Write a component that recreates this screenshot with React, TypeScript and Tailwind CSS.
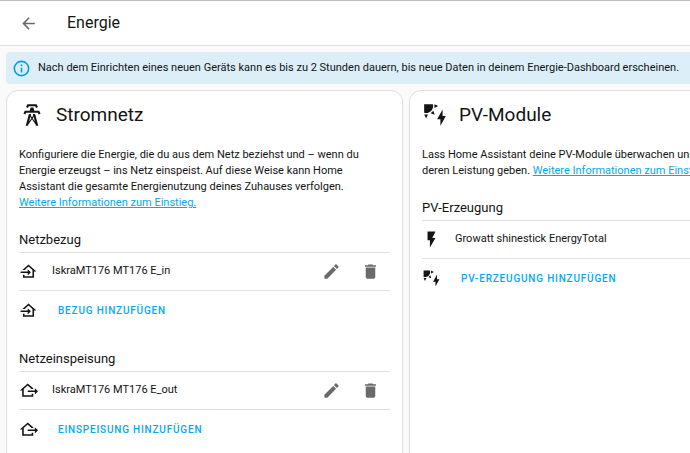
import React from 'react';

// Icon outlines on a 24x24 grid
const icons = {
  arrowLeft: 'M20,11V13H8L13.5,18.5L12.08,19.92L4.16,12L12.08,4.08L13.5,5.5L8,11H20Z',
  info: 'M11,9H13V7H11M12,20C7.59,20 4,16.41 4,12C4,7.59 7.59,4 12,4C16.41,4 20,7.59 20,12C20,16.41 16.41,20 12,20M12,2A10,10 0 0,0 2,12A10,10 0 0,0 12,22A10,10 0 0,0 22,12A10,10 0 0,0 12,2M11,17H13V11H11V17Z',
  tower: 'M8.28,5.45L6.5,4.55L7.76,2H16.23L17.5,4.55L15.72,5.44L15,4H9L8.28,5.45M18.62,8H14.09L13.3,5H10.7L9.91,8H5.38L4.1,10.55L5.89,11.44L6.62,10H17.38L18.1,11.45L19.89,10.56L18.62,8M17.77,22H15.7L15.46,21.1L12,15.9L8.53,21.1L8.3,22H6.23L9.12,11H11.19L10.83,12.35L12,14.1L13.16,12.35L12.81,11H14.88L17.77,22M11.4,15L10.5,13.65L9.32,18.13L11.4,15M14.68,18.12L13.5,13.64L12.6,15L14.68,18.12Z',
  homeImport: 'M15 13L11 17V14H2V12H11V9L15 13M5 20V16H7V18H17V10.19L12 5.69L7.21 10H4.22L12 3L22 12H19V20H5Z',
  homeExport: 'M24 13L20 17V14H11V12H20V9L24 13M4 20V12H1L11 3L18 9.3V10H15.79L11 5.69L6 10.19V18H16V16H18V20H4Z',
  solar: 'M11.45,2V5.55L15,3.77L11.45,2M10.45,8L8,10.46L11.75,11.71L10.45,8M2,11.45L3.77,15L5.55,11.45H2M10,2H2V10C2.57,10.17 3.17,10.25 3.77,10.25C7.35,10.26 10.26,7.35 10.27,3.75C10.26,3.16 10.17,2.57 10,2M17,22V16H14L19,7V13H22L17,22Z',
  flash: 'M7,2V13H10V22L17,10H13L17,2H7Z',
  pencil: 'M20.71,7.04C21.1,6.65 21.1,6 20.71,5.63L18.37,3.29C18,2.9 17.35,2.9 16.96,3.29L15.12,5.12L18.87,8.87M3,17.25V21H6.75L17.81,9.93L14.06,6.18L3,17.25Z',
  trash: 'M19,4H15.5L14.5,3H9.5L8.5,4H5V6H19M6,19A2,2 0 0,0 8,21H16A2,2 0 0,0 18,19V7H6V19Z',
};

type IconName = keyof typeof icons;

interface Section {
  title: string;
  icon: IconName;
  source: string;
  sourceIcon: IconName;
  editable: boolean;
  addLabel: string;
}

const gridSections: Section[] = [
  {
    title: 'Netzbezug',
    icon: 'homeImport',
    source: 'IskraMT176 MT176 E_in',
    sourceIcon: 'homeImport',
    editable: true,
    addLabel: 'Bezug hinzufügen',
  },
  {
    title: 'Netzeinspeisung',
    icon: 'homeExport',
    source: 'IskraMT176 MT176 E_out',
    sourceIcon: 'homeExport',
    editable: true,
    addLabel: 'Einspeisung hinzufügen',
  },
];

const solarSections: Section[] = [
  {
    title: 'PV-Erzeugung',
    icon: 'solar',
    source: 'Growatt shinestick EnergyTotal',
    sourceIcon: 'flash',
    editable: false,
    addLabel: 'PV-Erzeugung hinzufügen',
  },
];

function Icon({ name, className = 'size-[19px]' }: { name: IconName; className?: string }) {
  return (
    <svg viewBox="0 0 24 24" fill="currentColor" aria-hidden="true" className={`shrink-0 ${className}`}>
      <path d={icons[name]} />
    </svg>
  );
}

function IconButton({ name, label }: { name: IconName; label: string }) {
  return (
    <button type="button" aria-label={label} className="flex size-[39px] items-center justify-center text-[#6a6a6a]">
      <Icon name={name} />
    </button>
  );
}

function SourceSection({ section }: { section: Section }) {
  return (
    <section className="mb-5">
      <h3 className="border-b border-[#e0e0e0] pb-0.5 text-[13px] leading-5">{section.title}</h3>
      <div className="flex h-[38px] items-center border-b border-[#e0e0e0]">
        <Icon name={section.sourceIcon} />
        <span className="ml-3.5 grow text-[11px]">{section.source}</span>
        {section.editable && (
          <>
            <IconButton name="pencil" label={`${section.source} bearbeiten`} />
            <IconButton name="trash" label={`${section.source} löschen`} />
          </>
        )}
      </div>
      <div className="flex h-[38px] items-center">
        <Icon name={section.icon} />
        <button type="button" className="ml-3.5 px-1.5 text-[10px] font-medium tracking-[0.08em] text-[#03a9f4] uppercase">
          {section.addLabel}
        </button>
      </div>
    </section>
  );
}

interface EnergyCardProps {
  title: string;
  icon: IconName;
  text: string;
  sections: Section[];
}

function EnergyCard({ title, icon, text, sections }: EnergyCardProps) {
  return (
    <article className="rounded-xl border border-[#e0e0e0] bg-white px-3 pb-3">
      <h2 className="flex h-12 items-center gap-[11px] text-[19px]">
        <Icon name={icon} className="size-[26px]" />
        {title}
      </h2>
      <p className="mt-2 mb-[19px] pr-2 text-[11px] leading-4">
        {text}{' '}
        <a href="#einstieg" className="text-[#03a9f4] underline">
          Weitere Informationen zum Einstieg.
        </a>
      </p>
      {sections.map((section) => (
        <SourceSection key={section.title} section={section} />
      ))}
    </article>
  );
}

export default function App() {
  return (
    <div className="flex h-screen flex-col overflow-hidden bg-[#fafafa] font-[Roboto,sans-serif] text-[#141414]">
      <header className="flex h-[46px] shrink-0 items-center border-t border-b border-t-[#bdbdbd] border-b-[#e0e0e0] bg-white px-[9px]">
        <button type="button" aria-label="Zurück" className="flex size-[38px] items-center justify-center text-[#6a6a6a]">
          <Icon name="arrowLeft" />
        </button>
        <h1 className="ml-5 text-base">Energie</h1>
      </header>
      <main className="grow overflow-x-hidden overflow-y-auto [scrollbar-width:none]">
        <div className="min-w-[812px] p-1.5">
          <div role="note" className="flex h-8 items-center gap-[7px] rounded-sm bg-[#dceef8] px-1.5 text-[11px]">
            <Icon name="info" className="size-[19px] text-[#039be5]" />
            Nach dem Einrichten eines neuen Geräts kann es bis zu 2 Stunden dauern, bis neue Daten in deinem Energie-Dashboard erscheinen.
          </div>
          <div className="mt-1.5 grid grid-cols-[repeat(2,minmax(397px,1fr))] gap-1.5">
            <EnergyCard
              title="Stromnetz"
              icon="tower"
              text="Konfiguriere die Energie, die du aus dem Netz beziehst und – wenn du Energie erzeugst – ins Netz einspeist. Auf diese Weise kann Home Assistant die gesamte Energienutzung deines Zuhauses verfolgen."
              sections={gridSections}
            />
            <EnergyCard
              title="PV-Module"
              icon="solar"
              text="Lass Home Assistant deine PV-Module überwachen und dir Einblick in deren Leistung geben."
              sections={solarSections}
            />
          </div>
        </div>
      </main>
    </div>
  );
}
